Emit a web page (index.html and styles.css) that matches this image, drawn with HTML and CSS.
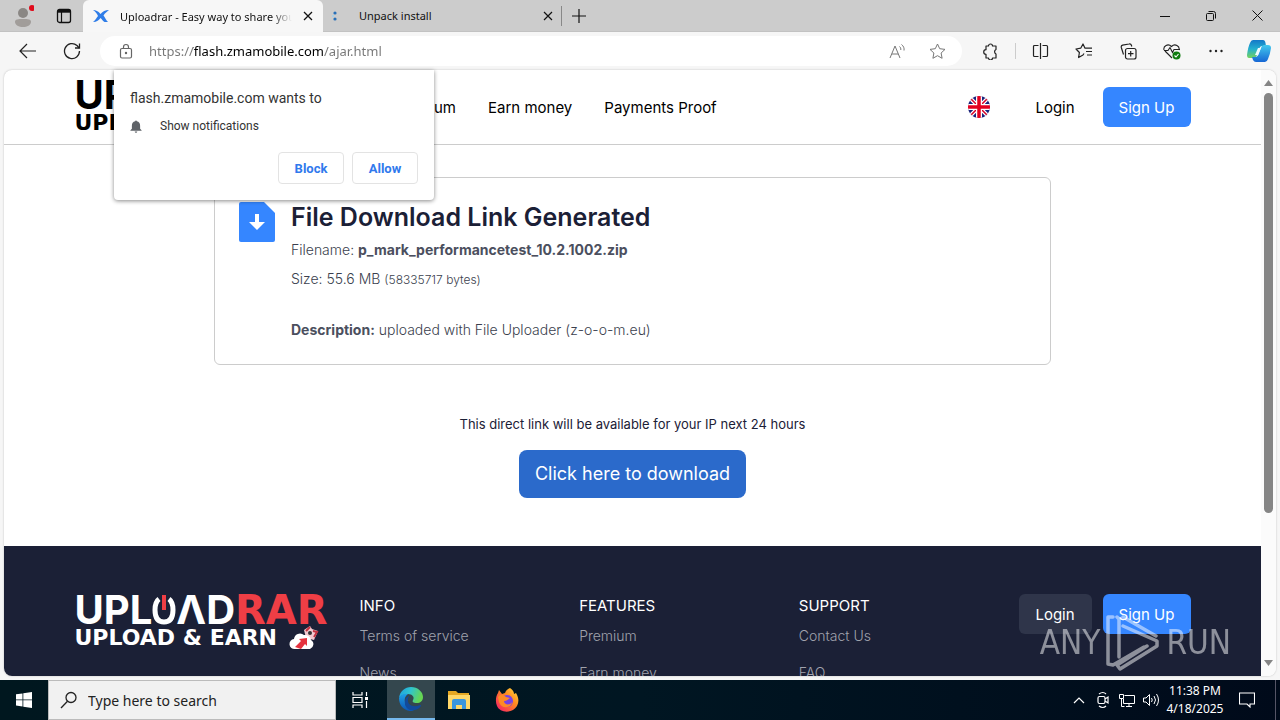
FILE: index.html
```html
<!DOCTYPE html>
<html lang="en">
<head>
<meta charset="utf-8">
<meta name="viewport" content="width=device-width, initial-scale=1">
<title>Uploadrar - Easy way to share your files</title>
<link rel="stylesheet" href="styles.css">
</head>
<body>
<div class="desktop">
  <header class="titlebar">
    <button class="slot profile" aria-label="Profile">
      <svg width="22" height="24" viewBox="0 0 22 24"><circle cx="11" cy="9" r="5" fill="#8a8784"/><path d="M3 18c0-3 3-3 8-3s8 0 8 3-4 5-8 5-8-2-8-5z" fill="#a19d9a"/><circle cx="20" cy="4" r="3" fill="#e00b1c"/></svg>
    </button>
    <button class="slot" aria-label="Tab actions">
      <svg width="16" height="16" viewBox="0 0 16 16" fill="none" stroke="#111"><rect x="1.500" y="1.500" width="13" height="13" rx="2" stroke-width="1.300"/><path d="M1.500 3.200h13" stroke-width="3"/><path d="M5.500 4v10" stroke-width="1.200"/></svg>
    </button>
    <div class="tabs">
      <div class="tab tab-active">
        <svg width="16" height="16" viewBox="0 0 16 16"><path d="M0 2c3 0 5 1 7.500 4C10 3.500 12 2 16 2c-2 1.500-4 3-5.500 5.500C12 9.500 13 12 15 14h-3.500C10 13 9 11.500 7.500 10 6 12 4 14 0 14c2-1.500 3.500-4 5-6C4 5.500 2.500 3.500 0 2z" fill="#2f7de8"/></svg>
        <span class="tab-title fade">Uploadrar - Easy way to share your files</span>
        <button class="tab-close" aria-label="Close tab"><svg width="10" height="10" viewBox="0 0 10 10" stroke="#111" stroke-width="1.300"><path d="M1 1l8 8M9 1l-8 8"/></svg></button>
      </div>
      <div class="tab">
        <svg width="16" height="16" viewBox="0 0 16 16"><circle cx="6" cy="5" r="1.600" fill="#2870b8"/><circle cx="6" cy="11" r="1.600" fill="#2870b8"/><circle cx="4" cy="8" r="1" fill="#9fd0ee"/></svg>
        <span class="tab-title">Unpack install</span>
        <button class="tab-close" aria-label="Close tab"><svg width="10" height="10" viewBox="0 0 10 10" stroke="#111" stroke-width="1.200"><path d="M1 1l8 8M9 1l-8 8"/></svg></button>
      </div>
      <button class="new-tab" aria-label="New tab"><svg width="14" height="14" viewBox="0 0 14 14" stroke="#111" stroke-width="1.200"><path d="M7 0v14M0 7h14"/></svg></button>
    </div>
    <div class="window-controls">
      <button aria-label="Minimize"><svg width="10" height="10" viewBox="0 0 10 10" stroke="#111"><path d="M0 5.500h10"/></svg></button>
      <button aria-label="Restore"><svg width="10" height="10" viewBox="0 0 10 10" fill="none" stroke="#111"><rect x=".5" y="2.500" width="7" height="7" rx="1"/><path d="M2.500 .5h5a2 2 0 0 1 2 2v5"/></svg></button>
      <button aria-label="Close"><svg width="11" height="11" viewBox="0 0 11 11" stroke="#111"><path d="M.5.5l10 10M10.500.5l-10 10"/></svg></button>
    </div>
  </header>

  <div class="toolbar">
    <button class="tool" aria-label="Back"><svg width="18" height="16" viewBox="0 0 18 16" fill="none" stroke="#222" stroke-width="1.200"><path d="M8 1L1 8l7 7M1 8h16"/></svg></button>
    <button class="tool" aria-label="Refresh"><svg width="18" height="18" viewBox="0 0 18 18" fill="none" stroke="#222" stroke-width="1.300"><path d="M16.500 9A7.500 7.500 0 1 1 14 3.500L16.200 6"/><path d="M16.500 1.500V6H12"/></svg></button>
    <div class="address">
      <svg width="14" height="16" viewBox="0 0 14 16" fill="none" stroke="#666" stroke-width="1.200"><rect x="1.500" y="5.500" width="11" height="9.500" rx="1.500"/><path d="M4.500 5.500V4a2.500 2.500 0 0 1 5 0v1.500"/><circle cx="7" cy="10" r=".6" fill="#666"/></svg>
      <input class="url" type="text" aria-label="Address" value="https://flash.zmamobile.com/ajar.html">
      <button class="in-address" aria-label="Read aloud"><svg width="17" height="16" viewBox="0 0 17 16" fill="none" stroke="#777"><path d="M1 15L6 3l5 12M2.800 11h6.400M10.500 3.500c1 .8 1.500 2 1.300 3.500M12.500 1.500c2 1.500 3 3.800 2.500 6"/></svg></button>
      <button class="in-address" aria-label="Add to favorites"><svg width="17" height="16" viewBox="0 0 17 16" fill="none" stroke="#777" stroke-linejoin="round"><path d="M8.500 1l2.200 4.700 5.300.7-3.900 3.600 1 5.300-4.600-2.600-4.600 2.600 1-5.300L1 6.400l5.300-.7z"/></svg></button>
    </div>
    <div class="actions">
      <button class="tool" aria-label="Extensions"><svg width="17" height="17" viewBox="0 0 17 17" fill="none" stroke="#222" stroke-width="1.200"><path d="M4 3h2.500a2 2 0 0 1 4 0H14v3.500a2.500 2.500 0 0 0 0 4.500v4h-3.500a2 2 0 0 1-4 0H4v-3.700a2.200 2.200 0 0 1 0-4.600z" stroke-linejoin="round"/></svg></button>
      <button class="tool divided" aria-label="Split screen"><svg width="17" height="16" viewBox="0 0 17 16" fill="none" stroke="#222" stroke-width="1.200"><path d="M6.500 2.500h-4a1 1 0 0 0-1 1v9a1 1 0 0 0 1 1h4M10.500 2.500h4a1 1 0 0 1 1 1v9a1 1 0 0 1-1 1h-4M8.500 0v16"/></svg></button>
      <button class="tool" aria-label="Favorites"><svg width="18" height="16" viewBox="0 0 18 16" fill="none" stroke="#222" stroke-width="1.200" stroke-linejoin="round"><path d="M9 10.500l-1 1.500-4.400 2.500.8-5L1 6l4.700-.8L8 1l2 4.200h7M11 8.500h6M12 12h5"/></svg></button>
      <button class="tool" aria-label="Collections"><svg width="17" height="17" viewBox="0 0 17 17" fill="none" stroke="#222" stroke-width="1.200"><rect x="5.500" y="5.500" width="10.500" height="10.500" rx="2"/><path d="M3.500 11.500L1.300 4.500a2 2 0 0 1 1.300-2.400L9 1a2 2 0 0 1 2.400 1.300l.4 1.200M10.700 8v5.500M8 10.700h5.500"/></svg></button>
      <button class="tool" aria-label="Browser essentials"><svg width="18" height="17" viewBox="0 0 18 17" fill="none" stroke="#222" stroke-width="1.100"><path d="M1 7C0 3 5 0 8.500 3.500 12 0 17 3 16 7M2 8l7 7M1 7.500h4l2-3 2.500 5 1.500-3h6"/><circle cx="13.500" cy="12.500" r="4" fill="#107c10" stroke="none"/><path d="M11.500 12.500l1.500 1.500 2.500-3" stroke="#fff"/></svg></button>
      <button class="tool" aria-label="More"><svg width="14" height="4" viewBox="0 0 14 4" fill="#222"><circle cx="1.500" cy="2" r="1.200"/><circle cx="7" cy="2" r="1.200"/><circle cx="12.500" cy="2" r="1.200"/></svg></button>
      <button class="tool" aria-label="Copilot"><svg width="24" height="22" viewBox="0 0 24 22"><defs><linearGradient id="cp1" x1="0" y1="0" x2="0" y2="1"><stop offset="0" stop-color="#1478c8"/><stop offset=".5" stop-color="#24b0cf"/><stop offset="1" stop-color="#76d35c"/></linearGradient><linearGradient id="cp2" x1="0" y1="0" x2="0" y2="1"><stop offset="0" stop-color="#42c9ee"/><stop offset="1" stop-color="#1767d4"/></linearGradient></defs><path d="M6 0h10q2 0 2.500 3l.5 3h-4q-2 0-3 3l-2 6q-1 3-4 3H2q-2 0-2-3 1-8 3-12 1-3 3-3z" fill="url(#cp1)"/><path d="M18 22H9q-2 0-3-2l-1-3h3q3 0 4-4l2-5q1-3 3-3h4q3 0 3 3-1 7-3 11-1 3-3 3z" fill="url(#cp2)"/><path d="M11 8h3l-3 7H8z" fill="#effbff"/></svg></button>
    </div>
  </div>

  <div class="viewport">
    <div class="page">
      <div class="site-header">
        <div class="container header-row">
          <a class="logo logo-dark" href="#"><span class="logo-name">UPL<svg class="power" role="img" aria-label="O" width="24" height="30" viewBox="0 0 24 30" fill="none"><path d="M7 4Q3 7 3 15q0 12 9 12t9-12q0-8-4-11" stroke="currentColor" stroke-width="5"/><path d="M12 0v15" stroke="#ef3e45" stroke-width="4"/></svg>ΛD<span class="logo-rar">RAR</span></span><span class="logo-tag">UPLOAD &amp; EARN</span></a>
          <nav class="nav"><a href="#">Premium</a><a href="#">Earn money</a><a href="#">Payments Proof</a></nav>
          <button class="flag" aria-label="English"><svg width="22" height="22" viewBox="0 0 22 22"><defs><clipPath id="disc"><circle cx="11" cy="11" r="11"/></clipPath></defs><g clip-path="url(#disc)"><path fill="#1a237b" d="M0 0h22v22H0z"/><path d="M0 0l22 22M22 0L0 22" stroke="#fff" stroke-width="4"/><path d="M0 0l22 22M22 0L0 22" stroke="#d80027" stroke-width="1.500"/><path d="M11 0v22M0 11h22" stroke="#fff" stroke-width="6"/><path d="M11 0v22M0 11h22" stroke="#e3001f" stroke-width="3.500"/></g></svg></button>
          <div class="auth"><a class="btn" href="#">Login</a><a class="btn btn-primary" href="#">Sign Up</a></div>
        </div>
      </div>
      <main class="main">
        <section class="card">
          <svg class="file-icon" width="36" height="40" viewBox="0 0 36 40"><path d="M2 0h23l11 11v27a2 2 0 0 1-2 2H2a2 2 0 0 1-2-2V2a2 2 0 0 1 2-2z" fill="#3586ff"/><path d="M16 12h4v8h6l-8 8-8-8h6z" fill="#fff"/></svg>
          <div class="details">
            <h1>File Download Link Generated</h1>
            <p>Filename: <b>p_mark_performancetest_10.2.1002.zip</b></p>
            <p>Size: 55.6 MB <small>(58335717 bytes)</small></p>
            <p class="description"><b>Description:</b> uploaded with File Uploader (z-o-o-m.eu)</p>
          </div>
        </section>
        <p class="notice">This direct link will be available for your IP next 24 hours</p>
        <a class="download" href="#">Click here to download</a>
      </main>
      <footer class="footer">
        <div class="container footer-row">
          <a class="logo" href="#"><span class="logo-name">UPL<svg class="power" role="img" aria-label="O" width="24" height="30" viewBox="0 0 24 30" fill="none"><path d="M7 4Q3 7 3 15q0 12 9 12t9-12q0-8-4-11" stroke="currentColor" stroke-width="5"/><path d="M12 0v15" stroke="#ef3e45" stroke-width="4"/></svg>ΛD<span class="logo-rar">RAR</span></span><span class="logo-tag">UPLOAD &amp; EARN<svg class="cloud" width="30" height="24" viewBox="0 0 28 24"><path d="M14 4l6-4 2 3 6 2-4 9-8-2z" fill="#f3c9cf"/><path d="M16 5l4-4M23 5l4 1-3 5" stroke="#c33240" stroke-width="2" fill="none"/><circle cx="20" cy="7" r="2" fill="#333"/><path d="M5 23a5 5 0 0 1-1-10 6 6 0 0 1 10-4 6 6 0 0 1 7 5 5 5 0 0 1-1 9z" fill="#fff"/><path d="M5 21l6-6-2-2 8-1v8l-2-2-4 5z" fill="#e5323e"/></svg></span></a>
          <div class="links"><h2>INFO</h2><a href="#">Terms of service</a><a href="#">News</a></div>
          <div class="links"><h2>FEATURES</h2><a href="#">Premium</a><a href="#">Earn money</a></div>
          <div class="links"><h2>SUPPORT</h2><a href="#">Contact Us</a><a href="#">FAQ</a></div>
          <div class="auth"><a class="btn btn-muted" href="#">Login</a><a class="btn btn-primary" href="#">Sign Up</a></div>
        </div>
      </footer>
    </div>
    <div class="scrollbar">
      <svg width="9" height="6" viewBox="0 0 9 6" fill="#858585"><path d="M4.500 0L9 6H0z"/></svg>
      <div class="track"><div class="thumb"></div></div>
      <svg width="9" height="6" viewBox="0 0 9 6" fill="#858585"><path d="M0 0h9L4.500 6z"/></svg>
    </div>
    <div class="watermark" aria-hidden="true"><span>ANY</span><svg width="56" height="58" viewBox="0 0 56 58" fill="none" stroke="#fff" stroke-width="3.500" stroke-linejoin="round" stroke-linecap="round"><path d="M8 3H3v47l5 1 31-18M14 43V5M14 5l-2-2M18 12l34 15v5L15 55l-3-4 30-19M18 3l33 19"/></svg><span>RUN</span></div>
  </div>

  <div class="permission" role="dialog" aria-labelledby="ask">
    <p class="ask" id="ask">flash.zmamobile.com wants to</p>
    <p class="what"><svg width="12" height="15" viewBox="0 0 14 15" fill="#5f6368"><path d="M6 1.500a1 1 0 0 1 2 0c2.500.6 3.800 2.500 3.800 5V10L13.500 12v.5H.5V12L2.200 10V6.500c0-2.500 1.300-4.400 3.800-5zM5.500 13.300h3a1.500 1.500 0 0 1-3 0z"/></svg>Show notifications</p>
    <div class="choices"><button>Block</button><button>Allow</button></div>
  </div>

  <div class="taskbar">
    <button class="task" aria-label="Start"><svg width="16" height="16" viewBox="0 0 16 16" fill="#fff"><path d="M0 2.300l6.500-.9v6.100H0zM7.300 1.300L16 0v7.500H7.300zM0 8.300h6.500v6.200L0 13.600zM7.300 8.300H16V16l-8.700-1.300z"/></svg></button>
    <label class="search"><svg width="18" height="18" viewBox="0 0 18 18" fill="none" stroke="#222" stroke-width="1.300"><circle cx="11" cy="6.500" r="5"/><path d="M7.500 10.200L1 17"/></svg><input type="text" placeholder="Type here to search" aria-label="Search"></label>
    <button class="task" aria-label="Task view"><svg width="18" height="18" viewBox="0 0 18 18" fill="none" stroke="#fff" stroke-width="1.200"><path d="M2 1v3h9V1M2 17v-3h9v3M2 6.500h9v5H2zM15.500 1v4M15.500 10v7"/><path d="M14 6h3v3h-3z" fill="#fff" stroke="none"/></svg></button>
    <button class="task task-active" aria-label="Edge"><svg width="24" height="24" viewBox="0 0 24 24"><defs><linearGradient id="e1" x1="0" y1="0" x2="1" y2=".3"><stop offset="0" stop-color="#1c9de0"/><stop offset=".5" stop-color="#2fc4cf"/><stop offset="1" stop-color="#66d653"/></linearGradient><linearGradient id="e2" x1="0" y1="0" x2="0" y2="1"><stop offset="0" stop-color="#1fa0e6"/><stop offset="1" stop-color="#0c55b4"/></linearGradient></defs><path d="M0 11C1 4 6 0 12 0c7 0 12 5 12 10 0 4-3 6-6 6-4 0-5-1-4-3 2-3-1-6-5-6-4 0-8 2-9 4z" fill="url(#e1)"/><path d="M0 11c1-3 5-5 9-4-3 2-4 5-3 9 1 5 5 7 9 7-1 1-3 1-4 1C4 23 0 18 0 11z" fill="url(#e2)"/><path d="M9 12c-1 6 5 9 12 6 1 0 1 0 1 1-5 7-15 5-16-2-.5-4 1-7 4-8 0 1-1 2-1 3z" fill="#124a9b"/></svg></button>
    <button class="task" aria-label="File Explorer"><svg width="22" height="20" viewBox="0 0 22 20"><path d="M0 1h8l2 2h11v16H0z" fill="#e5a823"/><path d="M0 5h22v14H0z" fill="#ffd869"/><path d="M4 19v-8q0-2 2-2h10q2 0 2 2v8h-4v-4H8v4z" fill="#3a96dd"/></svg></button>
    <button class="task" aria-label="Firefox"><svg width="24" height="24" viewBox="0 0 24 24"><defs><linearGradient id="ff" x1="1" y1="0" x2="0" y2="1"><stop offset="0" stop-color="#ffe23e"/><stop offset=".4" stop-color="#ff8a20"/><stop offset="1" stop-color="#f5156c"/></linearGradient></defs><path d="M15 0c3 2 4 4 4 6l2-1c3 5 3 9 1 13-5 8-17 7-20 0C0 13 1 8 3 5l1-3 3 4 3-1c1-3 3-4 5-5z" fill="url(#ff)"/><circle cx="12" cy="13" r="6" fill="#7542e5"/><path d="M3 9c3-4 6-2 8 0l4 1c-2 1-3 3-6 3 0 4 6 5 8 1-1 7-11 7-13 0z" fill="#ff8a25"/></svg></button>
    <div class="tray">
      <button aria-label="Hidden icons"><svg width="12" height="8" viewBox="0 0 12 8" fill="none" stroke="#fff" stroke-width="1.200"><path d="M1 7l5-5 5 5"/></svg></button>
      <button aria-label="Camera"><svg width="12" height="18" viewBox="0 0 12 18" fill="none" stroke="#fff" stroke-width="1.200"><rect x="1" y="5.500" width="7" height="7" rx="1.500"/><path d="M8 8l3-2v6L8 10M2 3q4-3 7 0M2 15q4 3 7 0"/></svg></button>
      <button aria-label="Network"><svg width="16" height="15" viewBox="0 0 16 15" fill="none" stroke="#fff"><path d="M5.500 2.500h10v8h-11V6M7 13.500h6M10 10.500v3M.5 1.500h4v4h-4zM2.500 5.500v8h3"/></svg></button>
      <button aria-label="Volume"><svg width="17" height="14" viewBox="0 0 17 14" fill="none" stroke="#fff"><path d="M.5 5h2.500l3.500-3.500v11L3 9H.5zM8.500 5q1.500 2 0 4M11 3q3 4 0 8M13.500 1q4 6 0 12"/></svg></button>
      <div class="clock"><span>11:38 PM</span><span>4/18/2025</span></div>
      <button class="notify" aria-label="Notifications"><svg width="16" height="16" viewBox="0 0 16 16" fill="none" stroke="#fff" stroke-width="1.100"><path d="M.5 1h15v11H11v3l-3-3H.5z"/></svg></button>
    </div>
  </div>
</div>
</body>
</html>
```

FILE: styles.css
```css
* { box-sizing: border-box; }
body { margin: 0; font-family: "Noto Sans", sans-serif; }
button { border: 0; padding: 0; background: none; font: inherit; color: inherit; display: flex; align-items: center; justify-content: center; }
input { border: 0; padding: 0; background: none; font: inherit; outline: 0; min-width: 0; }
a { color: inherit; text-decoration: none; }
p, h1, h2 { margin: 0; }
svg { display: block; flex: none; }

.desktop { position: relative; height: 100vh; display: flex; flex-direction: column; overflow: hidden; background: #f6f6f6; }

.titlebar { display: flex; height: 32px; flex: none; background: #ccc; border-bottom: 1px solid #c2c2c2; }
.slot { width: 38px; }
.profile { width: 45px; }
.tabs { display: flex; flex: 1; }
.tab { display: flex; align-items: center; width: 240px; padding: 0 10px; gap: 11px; font-size: 11px; color: #111; }
.tab .tab-title { flex: 1; overflow: hidden; white-space: nowrap; }
.tab-active { background: #f7f7f7; border-radius: 6px 6px 0 0; height: 32px; }
.tab:not(.tab-active) { padding-left: 6px; gap: 14px; }
.fade { mask-image: linear-gradient(90deg, #000 88%, transparent); }
.new-tab { width: 32px; position: relative; }
.new-tab::before { content: ""; position: absolute; left: -2px; top: 6px; width: 1px; height: 20px; background: #888; }
.window-controls { display: flex; }
.window-controls button { width: 46px; }

.toolbar { display: flex; align-items: center; height: 38px; flex: none; padding-left: 6px; }
.tool { width: 44px; height: 30px; }
.address { display: flex; align-items: center; flex: 1; height: 30px; margin-left: 6px; padding: 0 5px 0 19px; background: #fff; border-radius: 15px; }
.url { flex: 1; margin-left: 16px; font-size: 13px; color: transparent; background-image: linear-gradient(90deg, #767676 44px, #000 44px, #000 174px, #767676 174px); background-clip: text; -webkit-background-clip: text; }
.in-address { width: 40px; height: 30px; }
.actions { display: flex; padding-left: 6px; }
.actions .tool:last-child { width: 42px; }
.divided { position: relative; width: 50px; padding-left: 6px; }
.divided::before { content: ""; position: absolute; left: 3px; top: 7px; width: 1px; height: 16px; background: #ccc; }

.viewport { position: relative; display: flex; flex: 1; min-height: 0; margin: 0 4px 4px; border-radius: 8px; overflow: hidden; background: #fff; box-shadow: 0 0 2px #bbb; }
.page { flex: 1; overflow: hidden; font-family: Inter, sans-serif; font-size: 15px; color: #1b2036; }
.container { max-width: 1116px; margin: 0 auto; }
.site-header { border-bottom: 1px solid #ccc; }
.header-row { display: flex; align-items: center; height: 74px; color: #000; }
.logo { display: flex; flex-direction: column; width: 253px; color: #fff; white-space: nowrap; }
.logo-dark { color: #000; }
.logo-name { display: flex; align-items: center; font: 700 40px/32px Inter, sans-serif; }
.logo-rar { color: #ef3e45; font-family: "DejaVu Sans", sans-serif; }
.logo-tag { display: flex; align-items: center; gap: 12px; height: 24px; font: 700 22px/24px "DejaVu Sans", sans-serif; }
.nav { display: flex; gap: 32px; margin-left: 66px; flex: 1; }
.flag { margin-right: 29px; border-radius: 50%; }
.auth { display: flex; gap: 11px; flex: none; }
.btn { display: flex; align-items: center; justify-content: center; width: 73px; height: 40px; border-radius: 6px; }
.btn-primary { width: 88px; background: #3586ff; color: #fff; }
.btn-muted { background: #2f354a; color: #fff; }

.main { display: flex; flex-direction: column; align-items: center; padding: 32px 24px 48px; }
.card { display: flex; gap: 16px; width: 100%; max-width: 837px; padding: 24px 24px 20px; border: 1px solid #ccc; border-radius: 6px; }
.details { font-size: 14px; font-weight: 300; line-height: 29px; color: #3b3f4e; }
.details b { font-weight: 700; color: #4b4f5e; }
.details h1 { font-size: 25px; font-weight: 600; line-height: 30px; margin-bottom: 3px; color: #1b2036; }
.details small { font-size: 12px; }
.description { margin-top: 21px; }
.notice { margin-top: 47px; font-size: 13px; line-height: 24px; }
.download { margin-top: 14px; padding: 0 16px; border-radius: 8px; background: #2b6acb; color: #fff; font-size: 18px; line-height: 48px; }

.footer { background: #1b2036; height: 320px; padding-top: 48px; }
.footer-row { display: grid; grid-template-columns: 253px 1fr 1fr 1fr auto; align-items: start; }
.links { display: flex; flex-direction: column; margin-left: 32px; margin-right: -32px; color: #a0a3ad; }
.links h2 { font-size: 15px; font-weight: 400; line-height: 23px; color: #fff; }
.links a { line-height: 37px; font-size: 14px; font-weight: 300; }
.footer-row .auth { margin-left: 32px; }

.scrollbar { display: flex; flex-direction: column; align-items: center; width: 15px; padding: 10px 0; background: #fbfbfb; }
.track { flex: 1; width: 9px; padding: 7px 0; }
.thumb { height: 75%; border-radius: 5px; background: #858585; }

.watermark { position: absolute; right: 45px; bottom: 4px; display: flex; align-items: center; gap: 5px; color: #fff; opacity: .5; font: 33px/58px "Liberation Sans Narrow", "DejaVu Sans Condensed", sans-serif; }

.permission { position: absolute; left: 114px; top: 70px; width: 320px; padding: 16px; border-radius: 0 0 4px 4px; background: #fff; box-shadow: 0 1px 4px #0007; font-family: Roboto, sans-serif; color: #333; }
.ask { font-size: 14px; line-height: 24px; }
.what { display: flex; align-items: center; gap: 18px; height: 32px; font-size: 12px; }
.choices { display: flex; justify-content: flex-end; gap: 8px; margin-top: 10px; font-size: 13px; font-weight: 700; color: #3079ed; }
.choices button { width: 66px; height: 32px; border: 1px solid #e3e3e3; border-radius: 4px; }

.taskbar { display: flex; height: 40px; flex: none; color: #fff; background: linear-gradient(90deg, #00171f, #001622 50%, #000a1a); }
.task { width: 48px; height: 40px; flex: none; }
.task + .task-active { margin-left: 3px; }
.task-active { background: #34474e; border-bottom: 2px solid #76b9ed; }
.search { display: flex; align-items: center; gap: 10px; width: 288px; padding: 0 11px; border: 1px solid #bbb; background: #f1f1f1; color: #333; font-size: 14px; }
.search input { flex: 1; }
.search input::placeholder { color: #222; opacity: 1; }
.tray { display: flex; margin-left: auto; font-size: 12px; }
.tray button { width: 24px; }
.clock { display: flex; flex-direction: column; align-items: center; justify-content: center; width: 64px; line-height: 18px; }
.tray .notify { width: 49px; padding-right: 8px; border-right: 1px solid #556; margin-right: 4px; }
```
